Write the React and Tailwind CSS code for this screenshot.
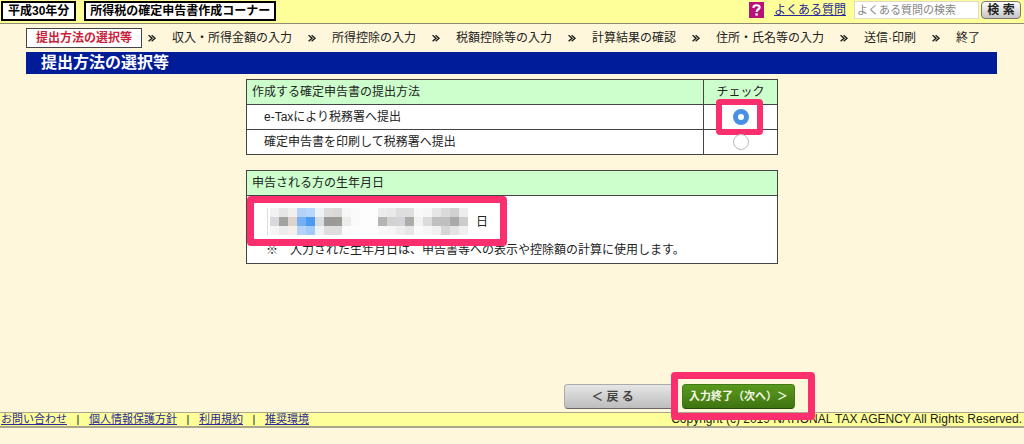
import React, { useState } from 'react';

const steps = [
  '収入・所得金額の入力',
  '所得控除の入力',
  '税額控除等の入力',
  '計算結果の確認',
  '住所・氏名等の入力',
  '送信·印刷',
  '終了',
];

const methods = [
  { id: 'etax', label: 'e-Taxにより税務署へ提出' },
  { id: 'print', label: '確定申告書を印刷して税務署へ提出' },
];

const footerLinks = ['お問い合わせ', '個人情報保護方針', '利用規約', '推奨環境'];

// masked birth date, one colour per block
const mosaic = [
  ['#f1f1f2', '#e6e6e6', '#f2f0ee', '#b5d3f8', '#b8d8fb', '#f0f3f6', '#dcdcda', '#d8d8d6', '#f6f6f6', '#fafafa', '#fdfdfd', '#fdfdfd', '#ececec', '#e9e9e9', '#dedede', '#dedede', '#f8f8f8', '#f6f6f6', '#e6e6e6', '#dadada', '#d0d0d0', '#ececec'],
  ['#d9d8da', '#a3a2a0', '#ddd3ca', '#74b0f5', '#4c9bf3', '#d9dde0', '#9a9a98', '#9a9a97', '#ececec', '#fafafa', '#fdfdfd', '#fdfdfd', '#b4b4b4', '#d2d2d2', '#d5d2d8', '#acacac', '#f2f2f2', '#dadada', '#bfbfc1', '#bfbfbf', '#a9a9a9', '#cccccc'],
  ['#f5f5f5', '#ececec', '#f4f0ec', '#b5d3f8', '#a2cbf9', '#f0f3f6', '#dedede', '#dedede', '#fbfbfb', '#fdfdfd', '#fdfdfd', '#fdfdfd', '#f8f8f8', '#f6f6f6', '#eeeeee', '#e6e6e6', '#fafafa', '#f6f6f6', '#f0f0f0', '#d6d6d6', '#e4e4e4', '#f0f0f0'],
];

const Chevron = () => (
  <svg width="8" height="8" viewBox="0 0 8 8" fill="none" stroke="#1a1a1a" strokeWidth="1.4">
    <path d="M0.6 1.2 L4 4.2 L0.6 7.2 M3.6 1.2 L7 4.2 L3.6 7.2" />
  </svg>
);

const Header = () => (
  <header className="flex h-6 items-start justify-between border-b border-[#8c8c70] bg-[#ffff99] pt-px pr-[3px] pl-px">
    <div className="flex gap-2 text-xs leading-4 font-bold text-black">
      <span className="border-2 border-black bg-white px-[5px]">平成30年分</span>
      <h1 className="border-2 border-black bg-white px-1">所得税の確定申告書作成コーナー</h1>
    </div>
    <form className="flex items-center" onSubmit={(e) => e.preventDefault()}>
      <svg width="15" height="16" viewBox="0 0 15 16">
        <rect width="15" height="16" fill="#b8127a" />
        <path d="M4.5 6 V5.2 C4.5 2.6 10.6 2.6 10.6 5.4 C10.6 7.4 7.6 7.2 7.6 10" fill="none" stroke="#fff" strokeWidth="2.2" />
        <rect x="6.4" y="11.4" width="2.4" height="2.2" fill="#fff" />
      </svg>
      <a href="#faq" className="ml-2.5 text-xs leading-4 text-[#28289a] underline">よくある質問</a>
      <input
        type="text"
        aria-label="よくある質問の検索"
        placeholder="よくある質問の検索"
        className="ml-2 h-[18px] w-[125px] border border-[#dcdcc8] bg-white px-0.5 text-[11px] placeholder:text-[#858585]"
      />
      <button type="submit" className="ml-0.5 h-[18px] w-10 rounded border border-[#777] bg-gradient-to-b from-white to-[#c4c4c4] text-xs leading-4 font-bold whitespace-nowrap text-[#222]">検 索</button>
    </form>
  </header>
);

const StepNav = () => (
  <ol className="flex h-7 items-center pl-[26px] text-xs whitespace-nowrap text-[#222]">
    <li className="border border-[#444] bg-white px-[9px] text-xs leading-[18px] font-bold text-[#cc1f3c]">提出方法の選択等</li>
    {steps.map((step, i) => (
      <li key={step} className={i === 0 ? 'ml-1.5 flex items-center gap-4' : 'ml-4 flex items-center gap-4'}>
        <Chevron />
        <span>{step}</span>
      </li>
    ))}
  </ol>
);

const Marker = ({ className }) => (
  <div className={`pointer-events-none absolute rounded border-[#fb2f6e] ${className}`} />
);

const App = () => {
  const [method, setMethod] = useState('etax');

  return (
    <div className="min-h-screen bg-[#fff7dc] font-['Liberation_Sans','Noto_Sans_CJK_JP',sans-serif] text-[#222]">
      <Header />
      <StepNav />
      <h2 className="mr-[27px] ml-[26px] bg-[#001c99] pl-[15px] text-base leading-[22px] font-bold text-white">提出方法の選択等</h2>

      <main className="mx-auto w-[532px] pt-[5px]">
        <table className="w-full table-fixed border-collapse bg-white text-xs leading-[18px]">
          <thead>
            <tr className="h-[25px] bg-[#ccffcc]">
              <th className="border border-[#444] px-[5px] text-left font-normal">作成する確定申告書の提出方法</th>
              <th className="w-[74px] border border-[#444] text-center font-normal">チェック</th>
            </tr>
          </thead>
          <tbody>
            {methods.map((m) => (
              <tr key={m.id} className="h-[25px]">
                <td className="border border-[#444] pl-[17px]">
                  <label htmlFor={m.id}>{m.label}</label>
                </td>
                <td className="border border-[#444] text-center">
                  <div className="relative flex justify-center">
                    <input
                      type="radio"
                      id={m.id}
                      name="method"
                      checked={method === m.id}
                      onChange={() => setMethod(m.id)}
                      className="size-4 appearance-none rounded-full border border-[#bbb] bg-white checked:border-[5px] checked:border-[#4a90e2]"
                    />
                    {m.id === 'etax' && <Marker className="-inset-y-2.5 right-3.5 left-3 border-[6px]" />}
                  </div>
                </td>
              </tr>
            ))}
          </tbody>
        </table>

        <section className="mt-[15px] border border-[#444] bg-white text-xs">
          <h3 className="border-b border-[#444] bg-[#ccffcc] px-[5px] leading-6">申告される方の生年月日</h3>
          <div className="relative flex items-center px-5 pt-3">
            <div className="mr-2 grid w-[201px] grid-cols-22 border-l border-[#ddd] pl-0.5">
              {mosaic.flat().map((color, i) => (
                <span key={i} className="h-[9px]" style={{ backgroundColor: color }} />
              ))}
            </div>
            <span>日</span>
            <Marker className="top-0 left-0 h-[50px] w-[260px] border-[7px]" />
          </div>
          <p className="px-[19px] pt-1.5 pb-1 leading-[18px]">※　入力された生年月日は、申告書等への表示や控除額の計算に使用します。</p>
        </section>
      </main>

      <div className="relative mt-[120px] mr-[229px] flex justify-end gap-[5px] pb-[3px]">
        <button type="button" className="h-[25px] w-[113px] rounded border border-[#aaa] border-b-[#666] bg-gradient-to-b from-[#e6e6e6] to-[#bdbdbd] pr-4 text-xs font-bold whitespace-pre text-[#444]">＜ 戻 る</button>
        <button type="button" className="h-[25px] w-[113px] rounded border border-[#3f7a14] border-b-[#244a08] bg-gradient-to-b from-[#5a9a1e] to-[#3f7410] text-[11px] font-bold whitespace-nowrap text-[#f4fae6]">入力終了（次へ）＞</button>
        <Marker className="-top-3 -right-5 z-10 h-12 w-36 border-[7px]" />
      </div>

      <footer className="flex h-4 items-center justify-between border-t border-b-2 border-[#aaa88c] bg-[#ffff99] pr-0.5 pl-px text-[11px] leading-[13px] whitespace-nowrap">
        <nav className="flex">
          {footerLinks.map((link, i) => (
            <span key={link} className="flex">
              {i > 0 && <span className="w-[22px] text-center">|</span>}
              <a href="#info" className="text-[#28289a] underline">{link}</a>
            </span>
          ))}
        </nav>
        <small className="text-xs leading-[13px]">Copyright (c) 2019 NATIONAL TAX AGENCY All Rights Reserved.</small>
      </footer>
    </div>
  );
};

export default App;
